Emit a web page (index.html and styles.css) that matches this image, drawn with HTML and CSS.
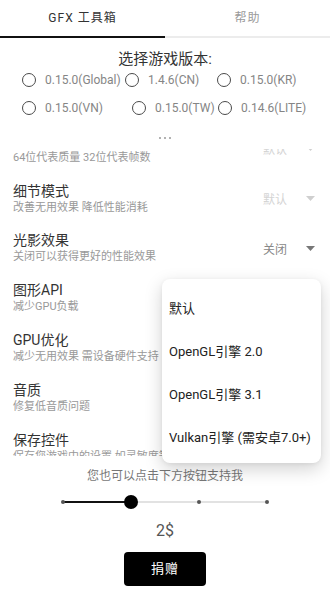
FILE: index.html
```html
<!DOCTYPE html>
<html lang="zh">
<head>
<meta charset="utf-8">
<link rel="stylesheet" href="styles.css">
</head>
<body>
<div class="app">
  <div class="tabs">
    <div class="tab active">GFX 工具箱</div>
    <div class="tab">帮助</div>
  </div>

  <div class="section-title">选择游戏版本:</div>
  <div class="radios">
    <div class="radio-row row-a">
      <div class="radio"><span class="circle"></span><span class="rlabel">0.15.0(Global)</span></div>
      <div class="radio"><span class="circle"></span><span class="rlabel">1.4.6(CN)</span></div>
      <div class="radio"><span class="circle"></span><span class="rlabel">0.15.0(KR)</span></div>
    </div>
    <div class="radio-row row-b">
      <div class="radio"><span class="circle"></span><span class="rlabel">0.15.0(VN)</span></div>
      <div class="radio"><span class="circle"></span><span class="rlabel">0.15.0(TW)</span></div>
      <div class="radio"><span class="circle"></span><span class="rlabel">0.14.6(LITE)</span></div>
    </div>
  </div>
  <div class="more"><span></span><span></span><span></span></div>

  <div class="list">
    <div class="list-inner">
      <div class="row">
        <div class="texts"><div class="rtitle">色彩</div><div class="rsub">64位代表质量 32位代表帧数</div></div>
        <div class="value disabled">默认</div><svg class="arrow disabled" viewBox="0 0 9 5"><path d="M0 0H9L4.5 5Z"/></svg>
      </div>
      <div class="row">
        <div class="texts"><div class="rtitle">细节模式</div><div class="rsub">改善无用效果 降低性能消耗</div></div>
        <div class="value disabled">默认</div><svg class="arrow disabled" viewBox="0 0 9 5"><path d="M0 0H9L4.5 5Z"/></svg>
      </div>
      <div class="row">
        <div class="texts"><div class="rtitle">光影效果</div><div class="rsub">关闭可以获得更好的性能效果</div></div>
        <div class="value">关闭</div><svg class="arrow" viewBox="0 0 9 5"><path d="M0 0H9L4.5 5Z"/></svg>
      </div>
      <div class="row">
        <div class="texts"><div class="rtitle">图形API</div><div class="rsub">减少GPU负载</div></div>
      </div>
      <div class="row">
        <div class="texts"><div class="rtitle">GPU优化</div><div class="rsub">减少无用效果 需设备硬件支持</div></div>
      </div>
      <div class="row">
        <div class="texts"><div class="rtitle">音质</div><div class="rsub">修复低音质问题</div></div>
      </div>
      <div class="row">
        <div class="texts"><div class="rtitle">保存控件</div><div class="rsub">保存您游戏中的设置 如灵敏度等</div></div>
      </div>
    </div>
  </div>

  <div class="support">您也可以点击下方按钮支持我</div>
  <div class="slider">
    <div class="track">
      <span class="fill"></span>
      <span class="tick t0"></span>
      <span class="tick t2"></span>
      <span class="tick t3"></span>
      <span class="thumb"></span>
    </div>
  </div>
  <div class="amount">2$</div>
  <div class="btn-wrap"><div class="donate">捐赠</div></div>

  <div class="menu">
    <div class="mitem">默认</div>
    <div class="mitem">OpenGL引擎 2.0</div>
    <div class="mitem">OpenGL引擎 3.1</div>
    <div class="mitem">Vulkan引擎 (需安卓7.0+)</div>
  </div>
</div>
</body>
</html>
```

FILE: styles.css
```css
* { box-sizing: border-box; }
html, body { margin: 0; padding: 0; background: #fff; }
body {
  font-family: "Roboto", "Noto Sans CJK SC", sans-serif;
  color: #333;
  width: 330px;
  height: 600px;
  overflow: hidden;
}
.app { position: relative; width: 330px; height: 600px; }

.tabs { display: flex; height: 38px; }
.tab {
  flex: 1;
  height: 38px;
  line-height: 36px;
  text-align: center;
  font-size: 12px;
  letter-spacing: 1px;
  color: #9a9a9a;
  border-bottom: 2px solid #ececec;
}
.tab.active { color: #333; border-bottom-color: #111; }

.section-title {
  margin-top: 11px;
  height: 20px;
  line-height: 20px;
  text-align: center;
  font-size: 15px;
  color: #333;
}

.radios { display: flex; flex-direction: column; gap: 6px; padding-left: 22px; }
.radio-row { display: grid; height: 22px; align-items: center; }
.row-a { grid-template-columns: 103px 92px auto; }
.row-b { grid-template-columns: 110px 86px auto; }
.radio { display: flex; align-items: center; gap: 9px; white-space: nowrap; }
.circle {
  width: 14px; height: 14px;
  border: 1.5px solid #4a4a4a;
  border-radius: 50%;
  flex: none;
}
.rlabel { font-size: 12px; color: #858585; }

.more {
  height: 30px;
  display: flex;
  justify-content: center;
  align-items: center;
  gap: 3px;
  padding-top: 8px;
}
.more span { width: 2px; height: 2px; border-radius: 50%; background: #999; }

.list { height: 307px; overflow: hidden; }
.list-inner { margin-top: -25px; }
.row {
  display: flex;
  align-items: center;
  height: 49.8px;
  padding: 0 15px 0 13px;
}
.texts { flex: 1; }
.rtitle { font-size: 14px; line-height: 18px; color: #333; }
.rsub { font-size: 11px; line-height: 16px; color: #999; }
.value { font-size: 12px; color: #888; margin-right: 19px; }
.value.disabled { color: #d4d4d4; }
.arrow { width: 9px; height: 5px; fill: #777; }
.arrow.disabled { fill: #cfcfcf; }

.support {
  margin-top: 12px;
  height: 16px;
  line-height: 16px;
  text-align: center;
  font-size: 12px;
  color: #777;
}

.slider { margin-top: 8px; height: 20px; display: flex; justify-content: center; align-items: center; }
.track { position: relative; width: 204px; height: 2px; background: #e2e2e2; }
.fill { position: absolute; left: 0; top: 0; width: 68px; height: 2px; background: #111; }
.tick { position: absolute; top: -1px; width: 4px; height: 4px; margin-left: -2px; border-radius: 50%; background: #555; }
.t0 { left: 0; }
.t2 { left: 136px; }
.t3 { left: 204px; }
.thumb { position: absolute; left: 68px; top: -6px; width: 14px; height: 14px; margin-left: -7px; border-radius: 50%; background: #000; }

.amount {
  margin-top: 9px;
  height: 20px;
  line-height: 20px;
  text-align: center;
  font-size: 16px;
  color: #555;
}

.btn-wrap { margin-top: 11px; display: flex; justify-content: center; }
.donate {
  width: 82px;
  height: 34px;
  line-height: 34px;
  border-radius: 4px;
  background: #000;
  color: #fff;
  text-align: center;
  font-size: 13px;
  letter-spacing: 1px;
}

.menu {
  position: absolute;
  left: 162px;
  top: 279px;
  width: 159px;
  height: 184px;
  padding: 8px 0 4px;
  background: #fff;
  border-radius: 8px;
  box-shadow: 0 6px 18px rgba(0,0,0,0.18), 0 1px 4px rgba(0,0,0,0.06);
}
.mitem {
  height: 43px;
  line-height: 43px;
  padding-left: 7px;
  font-size: 13px;
  color: #222;
  white-space: nowrap;
}
```
